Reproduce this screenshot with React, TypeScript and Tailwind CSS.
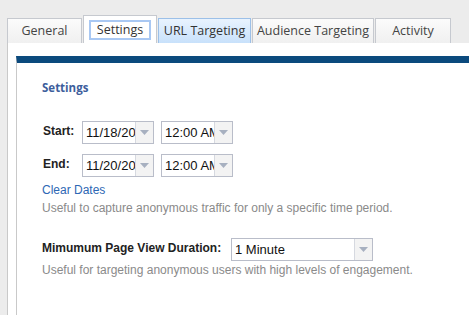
import React from 'react';

const tabs = [
    { label: 'General', w: 'w-[75px]', kind: 'plain' },
    { label: 'Settings', w: 'w-[74px]', kind: 'active' },
    { label: 'URL Targeting', w: 'w-[93px]', kind: 'hover' },
    { label: 'Audience Targeting', w: 'w-[122px]', kind: 'plain' },
    { label: 'Activity', w: 'w-[76px]', kind: 'plain' }
];

function Arrow() {
    return (
        <div className="w-[18px] h-full border-l border-[#d6d9e0] bg-[#f3f3f3] flex items-center justify-center">
            <svg width="9" height="5" viewBox="0 0 9 5">
                <path d="M0 0 L9 0 L4.5 5 Z" fill="#a7b0c0" />
            </svg>
        </div>
    );
}

function Combo({ value, width }: { value: string; width: string }) {
    return (
        <div className={`${width} h-[23px] border border-[#b9bdc9] bg-white flex items-stretch`}>
            <div className="flex-1 overflow-hidden whitespace-nowrap pl-[3px] text-[13px] leading-[21px] text-[#111]">
                {value}
            </div>
            <Arrow />
        </div>
    );
}

export default function App() {
    return (
        <div className="w-full h-[315px] bg-[#ececec] overflow-hidden flex flex-col" style={{ fontFamily: '"Liberation Sans", Arial, sans-serif' }}>
            <div className="h-[43px] flex items-end pl-[7px] gap-[1px] shrink-0" style={{ fontFamily: '"Open Sans", sans-serif' }}>
                {tabs.map((t) => {
                    if (t.kind === 'active') {
                        return (
                            <div key={t.label} className={`${t.w} h-[28px] border border-b-0 border-[#c6c9cf] bg-white flex items-center justify-center pt-[1px]`}>
                                <div className="w-[62px] h-[20px] border-2 border-[#a9c8f3] flex items-center justify-center text-[12.5px] text-[#333]">
                                    {t.label}
                                </div>
                            </div>
                        );
                    }
                    if (t.kind === 'hover') {
                        return (
                            <div key={t.label} className={`${t.w} h-[25px] border border-b-0 border-[#9cc0e8] bg-gradient-to-b from-[#e9f3fe] to-[#c8e1fb] flex items-center justify-center text-[12.5px] text-[#333]`}>
                                {t.label}
                            </div>
                        );
                    }
                    return (
                        <div key={t.label} className={`${t.w} h-[25px] border border-b-0 border-[#c6c9cf] bg-gradient-to-b from-[#fbfbfb] to-[#f0f0f0] flex items-center justify-center text-[12.5px] text-[#444]`}>
                            {t.label}
                        </div>
                    );
                })}
            </div>
            <div className="flex-1 ml-[7px] border-l border-[#c9c9c9] bg-white pt-[13px] pl-[8px] flex">
                <div className="flex-1 border-l border-[#c9c9c9] border-t-[7px] border-t-[#0b4a7d] pl-[25px] pt-[18px]">
                    <div className="text-[11.5px] leading-[14px] font-bold text-[#3d5e9c]" style={{ fontFamily: '"Open Sans", sans-serif' }}>
                        Settings
                    </div>
                    <div className="mt-[26px] flex items-center">
                        <div className="w-[40px] text-[12px] font-bold text-[#222] pl-[1px] -mt-[4px]">Start:</div>
                        <Combo value="11/18/20" width="w-[72px]" />
                        <div className="w-[7px]" />
                        <Combo value="12:00 AM" width="w-[72px]" />
                    </div>
                    <div className="mt-[10px] flex items-center">
                        <div className="w-[40px] text-[12px] font-bold text-[#222] pl-[1px] -mt-[4px]">End:</div>
                        <Combo value="11/20/20" width="w-[72px]" />
                        <div className="w-[7px]" />
                        <Combo value="12:00 AM" width="w-[72px]" />
                    </div>
                    <div className="mt-[4px] text-[12px] leading-[18px] text-[#2d67b4]">Clear Dates</div>
                    <div className="text-[12px] leading-[18px] text-[#8a8a8a]">
                        Useful to capture anonymous traffic for only a specific time period.
                    </div>
                    <div className="mt-[21px] flex items-center">
                        <div className="w-[189px] text-[12px] font-bold text-[#222] -mt-[4px]">Mimumum Page View Duration:</div>
                        <Combo value="1 Minute" width="w-[142px]" />
                    </div>
                    <div className="text-[12px] leading-[18px] text-[#8a8a8a]">
                        Useful for targeting anonymous users with high levels of engagement.
                    </div>
                </div>
            </div>
        </div>
    );
}
